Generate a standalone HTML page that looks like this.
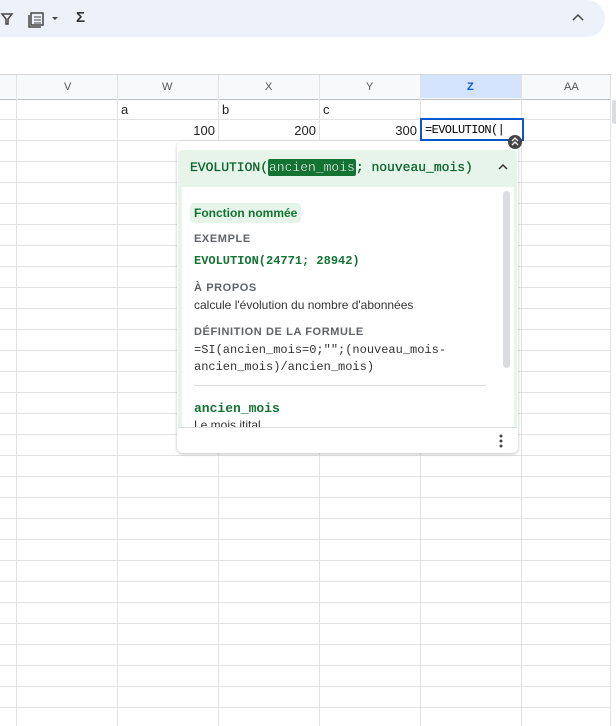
<!DOCTYPE html>
<html><head><meta charset="utf-8"><style>
body{margin:0;width:616px;height:726px;overflow:hidden;background:#fff;font-family:"Liberation Sans",Arial,sans-serif;position:relative}
.abs{position:absolute}
.mono{font-family:"Liberation Mono",monospace}
</style></head><body>
<div class="abs" style="left:-20px;top:0;width:625px;height:37px;background:#edf2fa;border-radius:0 0 18px 0;border-top-right-radius:18px"></div>
<svg class="abs" style="left:0;top:10px" width="100" height="18">
<path d="M2 4h10l-4 5v5h-2v-5z" fill="none" stroke="#444" stroke-width="1.5"/>
<rect x="31" y="3" width="12" height="12" fill="none" stroke="#444" stroke-width="1.5"/>
<path d="M29 5v12h12" fill="none" stroke="#444" stroke-width="1.5"/>
<path d="M34 7h7M34 10h7M34 13h7" stroke="#444" stroke-width="1"/>
<path d="M52 7l3 3l3-3z" fill="#444"/>
</svg>
<div class="abs" style="left:76px;top:9px;font-size:15px;color:#333;font-weight:bold">Σ</div>
<svg class="abs" style="left:572px;top:13px" width="12" height="10"><path d="M1 7l5-5l5 5" fill="none" stroke="#444" stroke-width="1.5"/></svg>
<div class="abs" style="left:0;top:74px;width:611px;height:24px;background:#f8f9fa;border-top:1px solid #d5d5d5;border-bottom:1px solid #c0c0c0"></div>
<div class="abs" style="left:420px;top:75px;width:101px;height:23px;background:#d3e3fd"></div>
<svg class="abs" style="left:0;top:0" width="616" height="726">
<g stroke="#e2e2e2" stroke-width="1">
<line x1="0" y1="119.5" x2="611" y2="119.5"/><line x1="0" y1="140.5" x2="611" y2="140.5"/>
<line x1="0" y1="161.5" x2="611" y2="161.5"/><line x1="0" y1="182.5" x2="611" y2="182.5"/>
<line x1="0" y1="203.5" x2="611" y2="203.5"/><line x1="0" y1="224.5" x2="611" y2="224.5"/>
<line x1="0" y1="245.5" x2="611" y2="245.5"/><line x1="0" y1="266.5" x2="611" y2="266.5"/>
<line x1="0" y1="287.5" x2="611" y2="287.5"/><line x1="0" y1="308.5" x2="611" y2="308.5"/>
<line x1="0" y1="329.5" x2="611" y2="329.5"/><line x1="0" y1="350.5" x2="611" y2="350.5"/>
<line x1="0" y1="371.5" x2="611" y2="371.5"/><line x1="0" y1="392.5" x2="611" y2="392.5"/>
<line x1="0" y1="413.5" x2="611" y2="413.5"/><line x1="0" y1="434.5" x2="611" y2="434.5"/>
<line x1="0" y1="455.5" x2="611" y2="455.5"/><line x1="0" y1="476.5" x2="611" y2="476.5"/>
<line x1="0" y1="497.5" x2="611" y2="497.5"/><line x1="0" y1="518.5" x2="611" y2="518.5"/>
<line x1="0" y1="539.5" x2="611" y2="539.5"/><line x1="0" y1="560.5" x2="611" y2="560.5"/>
<line x1="0" y1="581.5" x2="611" y2="581.5"/><line x1="0" y1="602.5" x2="611" y2="602.5"/>
<line x1="0" y1="623.5" x2="611" y2="623.5"/><line x1="0" y1="644.5" x2="611" y2="644.5"/>
<line x1="0" y1="665.5" x2="611" y2="665.5"/><line x1="0" y1="686.5" x2="611" y2="686.5"/>
<line x1="0" y1="707.5" x2="611" y2="707.5"/>
<line x1="16.5" y1="75" x2="16.5" y2="726"/><line x1="117.5" y1="75" x2="117.5" y2="726"/>
<line x1="218.5" y1="75" x2="218.5" y2="726"/><line x1="319.5" y1="75" x2="319.5" y2="726"/>
<line x1="420.5" y1="75" x2="420.5" y2="726"/><line x1="521.5" y1="75" x2="521.5" y2="726"/>
<line x1="610.5" y1="75" x2="610.5" y2="726"/>
</g>
<rect x="612" y="100" width="5" height="24" rx="2.5" fill="#dadce0"/>
</svg>
<div class="abs" style="top:81px;left:0;width:611px;font-size:11px;color:#555">
<span class="abs" style="left:64px">V</span><span class="abs" style="left:162px">W</span><span class="abs" style="left:265px">X</span><span class="abs" style="left:366px">Y</span><span class="abs" style="left:467px;color:#0b57d0;font-weight:bold">Z</span><span class="abs" style="left:564px">AA</span></div>
<div class="abs" style="top:102px;font-size:13px;color:#222;left:121px">a</div>
<div class="abs" style="top:102px;font-size:13px;color:#222;left:222px">b</div>
<div class="abs" style="top:102px;font-size:13px;color:#222;left:323px">c</div>
<div class="abs" style="top:123px;font-size:13px;color:#222;left:117px;width:98px;text-align:right">100</div>
<div class="abs" style="top:123px;font-size:13px;color:#222;left:218px;width:98px;text-align:right">200</div>
<div class="abs" style="top:123px;font-size:13px;color:#222;left:319px;width:98px;text-align:right">300</div>
<div class="abs mono" style="left:420px;top:118px;width:97px;height:19px;border:2px solid #0b57d0;background:#fff;font-size:12px;line-height:21px;padding-left:3px;box-sizing:content-box;letter-spacing:-0.6px">=EVOLUTION(|</div>
<div class="abs" style="left:177px;top:141px;width:341px;height:312px;background:#fff;border-radius:6px;box-shadow:0 1px 3px rgba(0,0,0,.25)"></div>
<div class="abs" style="left:178px;top:150px;width:339px;height:277px;background:#e6f4ea;border-radius:4px 4px 0 0"></div>
<div class="abs mono" style="left:190px;top:159px;font-size:13px;color:#0d652d;line-height:18px;-webkit-text-stroke:0.3px #0d652d">EVOLUTION(<span style="background:#137333;color:#fff;padding:1px 1px;border-radius:2px">ancien_mois</span>; nouveau_mois)</div>
<svg class="abs" style="left:497px;top:162px" width="12" height="10"><path d="M2 7l4-4l4 4" fill="none" stroke="#333" stroke-width="1.5"/></svg>
<div class="abs" style="left:182px;top:187px;width:332px;height:240px;background:#fff;overflow:hidden">
<div class="abs" style="left:321px;top:4px;width:7px;height:177px;background:#dadce0;border-radius:4px"></div>
<div class="abs" style="left:8px;top:16px;background:#e6f4ea;color:#137333;font-size:12px;font-weight:bold;padding:3px 4px;border-radius:4px">Fonction nommée</div>
<div class="abs" style="left:12px;top:46px;font-size:11px;font-weight:bold;color:#5f6368;letter-spacing:.6px">EXEMPLE</div>
<div class="abs mono" style="left:12px;top:67px;font-size:12px;font-weight:bold;color:#137333">EVOLUTION(24771; 28942)</div>
<div class="abs" style="left:12px;top:95px;font-size:11px;font-weight:bold;color:#5f6368;letter-spacing:.6px">À PROPOS</div>
<div class="abs" style="left:12px;top:111px;font-size:12px;color:#333">calcule l'évolution du nombre d'abonnées</div>
<div class="abs" style="left:12px;top:139px;font-size:11px;font-weight:bold;color:#5f6368;letter-spacing:.6px">DÉFINITION DE LA FORMULE</div>
<div class="abs mono" style="left:12px;top:155px;font-size:12px;color:#333;line-height:17px">=SI(ancien_mois=0;"";(nouveau_mois-<br>ancien_mois)/ancien_mois)</div>
<div class="abs" style="left:12px;top:198px;width:292px;height:1px;background:#dadce0"></div>
<div class="abs mono" style="left:12px;top:214px;font-size:13px;font-weight:bold;color:#137333">ancien_mois</div>
<div class="abs" style="left:12px;top:231px;font-size:12px;color:#333">Le mois itital</div>
</div>
<div class="abs" style="left:178px;top:427px;width:339px;height:1px;background:#dadce0"></div>
<svg class="abs" style="left:497px;top:433px" width="8" height="16"><circle cx="4" cy="3" r="1.5" fill="#444"/><circle cx="4" cy="8" r="1.5" fill="#444"/><circle cx="4" cy="13" r="1.5" fill="#444"/></svg>
<svg class="abs" style="left:507px;top:134px" width="16" height="16"><circle cx="8" cy="8" r="7" fill="#444"/><path d="M5 7l3-3l3 3M5 11l3-3l3 3" fill="none" stroke="#fff" stroke-width="1.3"/></svg>
</body></html>
